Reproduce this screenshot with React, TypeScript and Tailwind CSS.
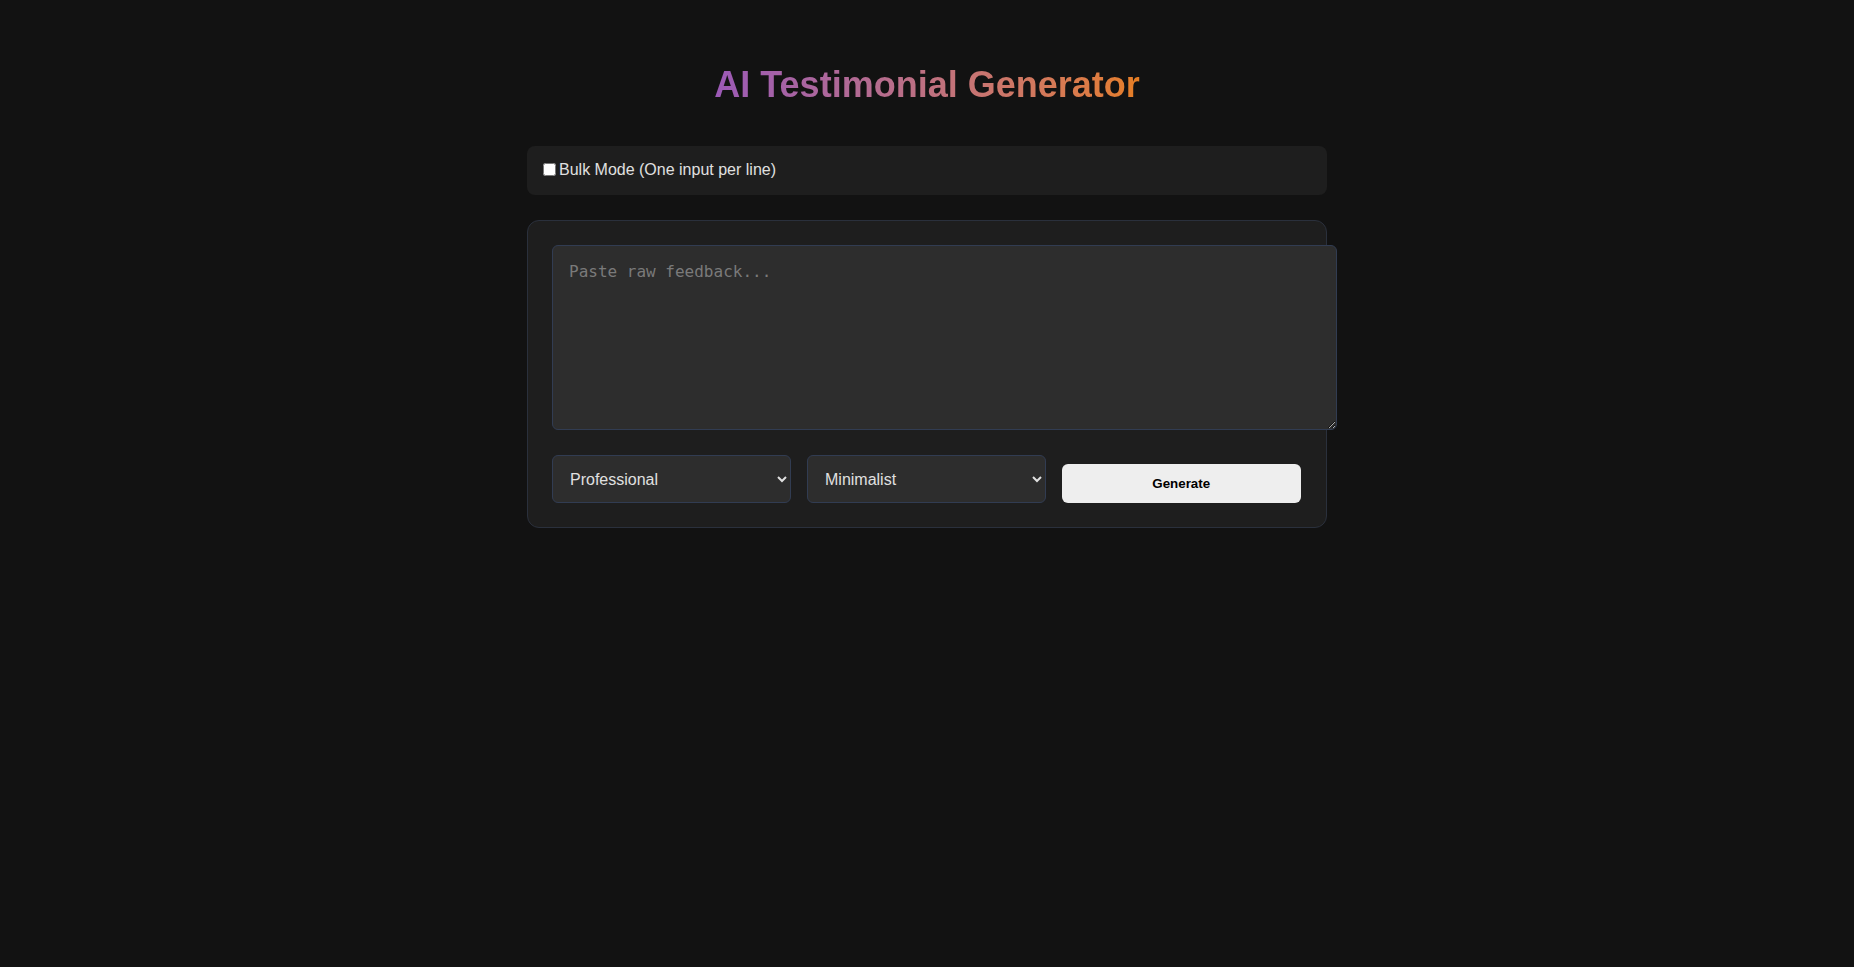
import { useState } from "react";

const tones = ["Professional", "Casual", "Enthusiastic", "Concise"];
const styles = ["Minimalist", "Detailed", "Storytelling", "Bullet Points"];

const App = () => {
  const [bulk, setBulk] = useState(false);
  const [text, setText] = useState("");
  const [tone, setTone] = useState(tones[0]);
  const [style, setStyle] = useState(styles[0]);

  return (
    <div className="min-h-[967px] w-full bg-[#121212] font-['Liberation_Sans',Arial,sans-serif] text-[#e0e0e0]">
      <div className="mx-auto flex w-[800px] flex-col pt-[65px]">
        <div className="mb-[41px] text-center">
          <h1 className="inline-block bg-gradient-to-r from-[#9b59b6] to-[#e67e22] bg-clip-text text-[36px] leading-[40px] font-bold text-transparent">
            AI Testimonial Generator
          </h1>
        </div>

        {/* bulk toggle */}
        <div className="mb-[25px] rounded-lg bg-[#1e1e1e] px-3 pt-3 pb-[13px]">
          <label className="flex h-6 items-center text-base">
            <input
              type="checkbox"
              checked={bulk}
              onChange={(e) => setBulk(e.target.checked)}
              className="mt-[1px] mr-[3px] mb-[3px] ml-1 h-[13px] w-[13px]"
            />
            <span>Bulk Mode (One input per line)</span>
          </label>
        </div>

        <div className="rounded-xl border border-[#2a303c] bg-[#1e1e1e] p-6">
          <textarea
            value={text}
            onChange={(e) => setText(e.target.value)}
            placeholder={bulk ? "Paste raw feedback, one per line..." : "Paste raw feedback..."}
            className="block h-[185px] w-[785px] rounded-md border border-[#313c52] bg-[#2d2d2d] px-4 pt-[14px] pb-4 font-['DejaVu_Sans_Mono',monospace] text-base text-[#e0e0e0] placeholder:text-[#7a7a7a] focus:outline-none"
          />
          <div className="mt-[25px] flex items-end gap-[16.5px]">
            <select
              value={tone}
              onChange={(e) => setTone(e.target.value)}
              className="h-12 w-[238.5px] shrink-0 rounded-md border border-[#313c52] bg-[#2d2d2d] px-[13px] text-base text-[#e0e0e0]"
            >
              {tones.map((t) => (
                <option key={t} value={t}>
                  {t}
                </option>
              ))}
            </select>
            <select
              value={style}
              onChange={(e) => setStyle(e.target.value)}
              className="h-12 w-[238.5px] shrink-0 rounded-md border border-[#313c52] bg-[#2d2d2d] px-[13px] text-base text-[#e0e0e0]"
            >
              {styles.map((s) => (
                <option key={s} value={s}>
                  {s}
                </option>
              ))}
            </select>
            <button className="h-[39px] w-[238.5px] shrink-0 rounded-md bg-[#eeeeee] text-[13.333px] font-bold text-black">
              Generate
            </button>
          </div>
        </div>
      </div>
    </div>
  );
};

export default App;
